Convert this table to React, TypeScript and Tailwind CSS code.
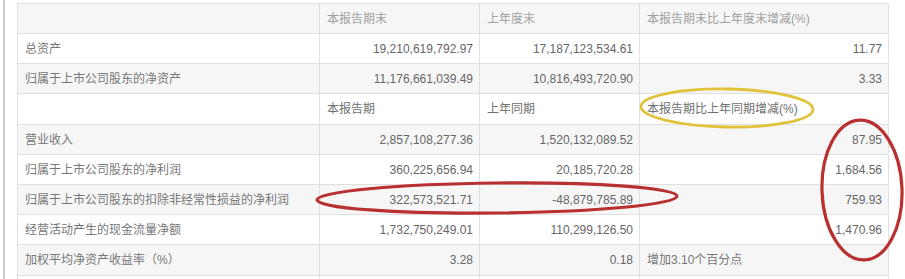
import React from 'react';

type Row = {
  label: string;
  a: string;
  b: string;
  c: string;
  head?: boolean;
  cLeft?: boolean;
  h: string;
};

const rows: Row[] = [
  { label: '', a: '本报告期末', b: '上年度末', c: '本报告期末比上年度末增减(%)', head: true, h: 'h-[30px]' },
  { label: '总资产', a: '19,210,619,792.97', b: '17,187,123,534.61', c: '11.77', h: 'h-[30px]' },
  { label: '归属于上市公司股东的净资产', a: '11,176,661,039.49', b: '10,816,493,720.90', c: '3.33', h: 'h-[30px]' },
  { label: '', a: '本报告期', b: '上年同期', c: '本报告期比上年同期增减(%)', head: true, h: 'h-[31px]' },
  { label: '营业收入', a: '2,857,108,277.36', b: '1,520,132,089.52', c: '87.95', h: 'h-[30px]' },
  { label: '归属于上市公司股东的净利润', a: '360,225,656.94', b: '20,185,720.28', c: '1,684.56', h: 'h-[30px]' },
  { label: '归属于上市公司股东的扣除非经常性损益的净利润', a: '322,573,521.71', b: '-48,879,785.89', c: '759.93', h: 'h-[30px]' },
  { label: '经营活动产生的现金流量净额', a: '1,732,750,249.01', b: '110,299,126.50', c: '1,470.96', h: 'h-[30px]' },
  { label: '加权平均净资产收益率（%）', a: '3.28', b: '0.18', c: '增加3.10个百分点', cLeft: true, h: 'h-[31px]' },
  { label: '', a: '', b: '', c: '', h: 'h-[30px]' },
];

const cjk = "font-['Liberation_Sans','Noto_Sans_CJK_SC',sans-serif]";

export default function App() {
  return (
    <div className={`relative w-[905px] h-[279px] overflow-hidden bg-white ${cjk} text-[12px]`}>
      <div className="flex h-full">
        <div className="ml-[3px] w-[2px] h-full bg-[#c9c9c9]" />
        <div className="ml-[12px] mt-[3px] w-[871px] border-t border-l border-[#e0e0e0]">
          {rows.map((r, i) => (
            <div
              key={i}
              className={`grid grid-cols-[302px_160px_160px_249px] ${r.h} border-b border-[#e0e0e0] ${
                i % 2 === 0 ? 'bg-[#f6f6f6]' : 'bg-white'
              }`}
            >
              <div className="flex items-center pl-[7px] border-r border-[#e0e0e0] text-[#777]">{r.label}</div>
              {r.head ? (
                <>
                  <div className={`flex items-center pl-[7px] border-r border-[#e0e0e0] ${i === 0 ? 'text-[#a0a0a0]' : 'text-[#707070]'}`}>{r.a}</div>
                  <div className={`flex items-center pl-[7px] border-r border-[#e0e0e0] ${i === 0 ? 'text-[#a0a0a0]' : 'text-[#707070]'}`}>{r.b}</div>
                  <div className={`flex items-center pl-[7px] border-r border-[#e0e0e0] ${i === 0 ? 'text-[#a0a0a0]' : 'text-[#707070]'}`}>{r.c}</div>
                </>
              ) : (
                <>
                  <div className="flex items-center justify-end pr-[6px] border-r border-[#e0e0e0] text-[#666]">{r.a}</div>
                  <div className="flex items-center justify-end pr-[6px] border-r border-[#e0e0e0] text-[#666]">{r.b}</div>
                  <div
                    className={`flex items-center border-r border-[#e0e0e0] ${
                      r.cLeft ? 'pl-[7px] text-[#777]' : 'justify-end pr-[6px] text-[#666]'
                    }`}
                  >
                    {r.c}
                  </div>
                </>
              )}
            </div>
          ))}
        </div>
      </div>

      {/* hand-drawn highlight marks */}
      <svg className="absolute inset-0 pointer-events-none" width="905" height="279" viewBox="0 0 905 279">
        <ellipse cx="727" cy="108" rx="86" ry="19" fill="none" stroke="#e2c23a" strokeWidth="2.8" transform="rotate(1 727 108)" />
        <ellipse cx="497" cy="198" rx="180" ry="15" fill="none" stroke="#b83030" strokeWidth="3.2" transform="rotate(-0.6 497 198)" />
        <ellipse cx="862" cy="190" rx="40" ry="70" fill="none" stroke="#b83030" strokeWidth="3.2" transform="rotate(-2 862 190)" />
      </svg>
    </div>
  );
}
